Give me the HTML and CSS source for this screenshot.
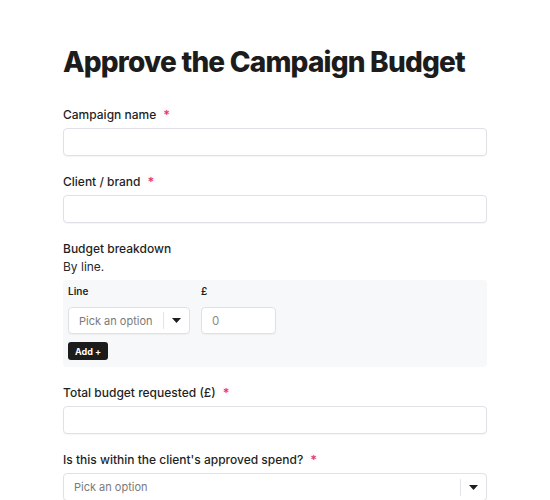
FILE: index.html
```html
<!DOCTYPE html>
<html lang="en">

<head>
    <meta charset="UTF-8">
    <meta name="viewport" content="width=device-width, initial-scale=1.0">
    <title>Approve the Campaign Budget</title>
    <link rel="stylesheet" href="styles.css">
</head>

<body>
    <main class="page">
        <h1>Approve the Campaign Budget</h1>

        <form class="budget-form">
            <div class="field">
                <label for="campaignName">Campaign name <span class="req">*</span></label>
                <input type="text" id="campaignName" class="text-input">
            </div>

            <div class="field">
                <label for="client">Client / brand <span class="req">*</span></label>
                <input type="text" id="client" class="text-input">
            </div>

            <div class="field">
                <label>Budget breakdown</label>
                <p class="hint">By line.</p>
                <div class="repeater">
                    <div class="repeater-row">
                        <div class="col col-line">
                            <span class="col-label">Line</span>
                            <div class="picker">
                                <span class="picker-value">Pick an option</span>
                                <span class="picker-toggle">
                                    <svg width="9" height="5" viewBox="0 0 9 5"><path d="M0 0h9L4.5 5z" fill="#1d1d1d"/></svg>
                                </span>
                            </div>
                        </div>
                        <div class="col col-amount">
                            <span class="col-label">£</span>
                            <input type="text" class="text-input small" placeholder="0">
                        </div>
                    </div>
                    <button type="button" class="add-btn">Add +</button>
                </div>
            </div>

            <div class="field">
                <label for="total">Total budget requested (£) <span class="req">*</span></label>
                <input type="text" id="total" class="text-input">
            </div>

            <div class="field">
                <label>Is this within the client's approved spend? <span class="req">*</span></label>
                <div class="picker wide">
                    <span class="picker-value">Pick an option</span>
                    <span class="picker-toggle">
                        <svg width="9" height="5" viewBox="0 0 9 5"><path d="M0 0h9L4.5 5z" fill="#1d1d1d"/></svg>
                    </span>
                </div>
            </div>
        </form>
    </main>
</body>

</html>
```

FILE: styles.css
```css
body {
    font-family: Inter, "Noto Sans", sans-serif;
    margin: 0;
    padding: 0;
    background-color: #fff;
    color: #1f1f1f;
}

.page {
    width: 424px;
    margin: 0 63px;
    padding-top: 45px;
}

h1 {
    margin: 0 0 27px;
    font-size: 28px;
    line-height: 34px;
    font-weight: 800;
    letter-spacing: -0.8px;
    color: #1c1c1c;
}

.field {
    margin-bottom: 17px;
}

.field label {
    display: block;
    padding-top: 1px;
    font-size: 12px;
    line-height: 16px;
    font-weight: 500;
    margin-bottom: 5px;
}

.req {
    margin-left: 4px;
    color: #e6336f;
    text-shadow: 0 0 3px rgba(230, 51, 111, 0.35);
}

.hint {
    margin: -3px 0 5px;
    font-size: 12px;
    line-height: 16px;
    color: #2a2a2a;
}

.text-input {
    display: block;
    box-sizing: border-box;
    width: 100%;
    height: 28px;
    padding: 0 10px;
    border: 1px solid #dfe1e6;
    border-radius: 4px;
    box-shadow: 0 1px 1px rgba(0, 0, 0, 0.04);
    background: #fff;
    font-family: inherit;
    font-size: 11.5px;
    color: #1f1f1f;
}

.text-input::placeholder {
    color: #8a8a8a;
}

.text-input.small {
    width: 75px;
    height: 27px;
}

/* repeating rows for the breakdown */
.repeater {
    background-color: #f7f8fa;
    border-radius: 4px;
    padding: 5px 5px 7px;
}

.repeater-row {
    display: flex;
    gap: 11px;
}

.col {
    display: flex;
    flex-direction: column;
    gap: 10px;
}

.col-label {
    font-size: 10px;
    line-height: 12px;
    font-weight: 600;
    color: #1f1f1f;
}

.picker {
    display: flex;
    align-items: center;
    box-sizing: border-box;
    width: 122px;
    height: 27px;
    border: 1px solid #dfe1e6;
    border-radius: 4px;
    background: #fff;
    box-shadow: 0 1px 1px rgba(0, 0, 0, 0.04);
}

.picker.wide {
    width: 100%;
    height: 28px;
}

.picker-value {
    flex: 1;
    padding-left: 10px;
    font-size: 11px;
    white-space: nowrap;
    color: #7a7a7a;
}

.picker-toggle {
    display: flex;
    align-items: center;
    justify-content: center;
    width: 25px;
    height: 17px;
    border-left: 1px solid #e2e4e8;
}

.add-btn {
    display: block;
    margin-top: 8px;
    height: 18px;
    padding: 0 7px;
    border: none;
    border-radius: 3px;
    background-color: #1c1c1c;
    color: #fff;
    font-family: inherit;
    font-size: 9px;
    font-weight: 700;
    cursor: pointer;
}
```
